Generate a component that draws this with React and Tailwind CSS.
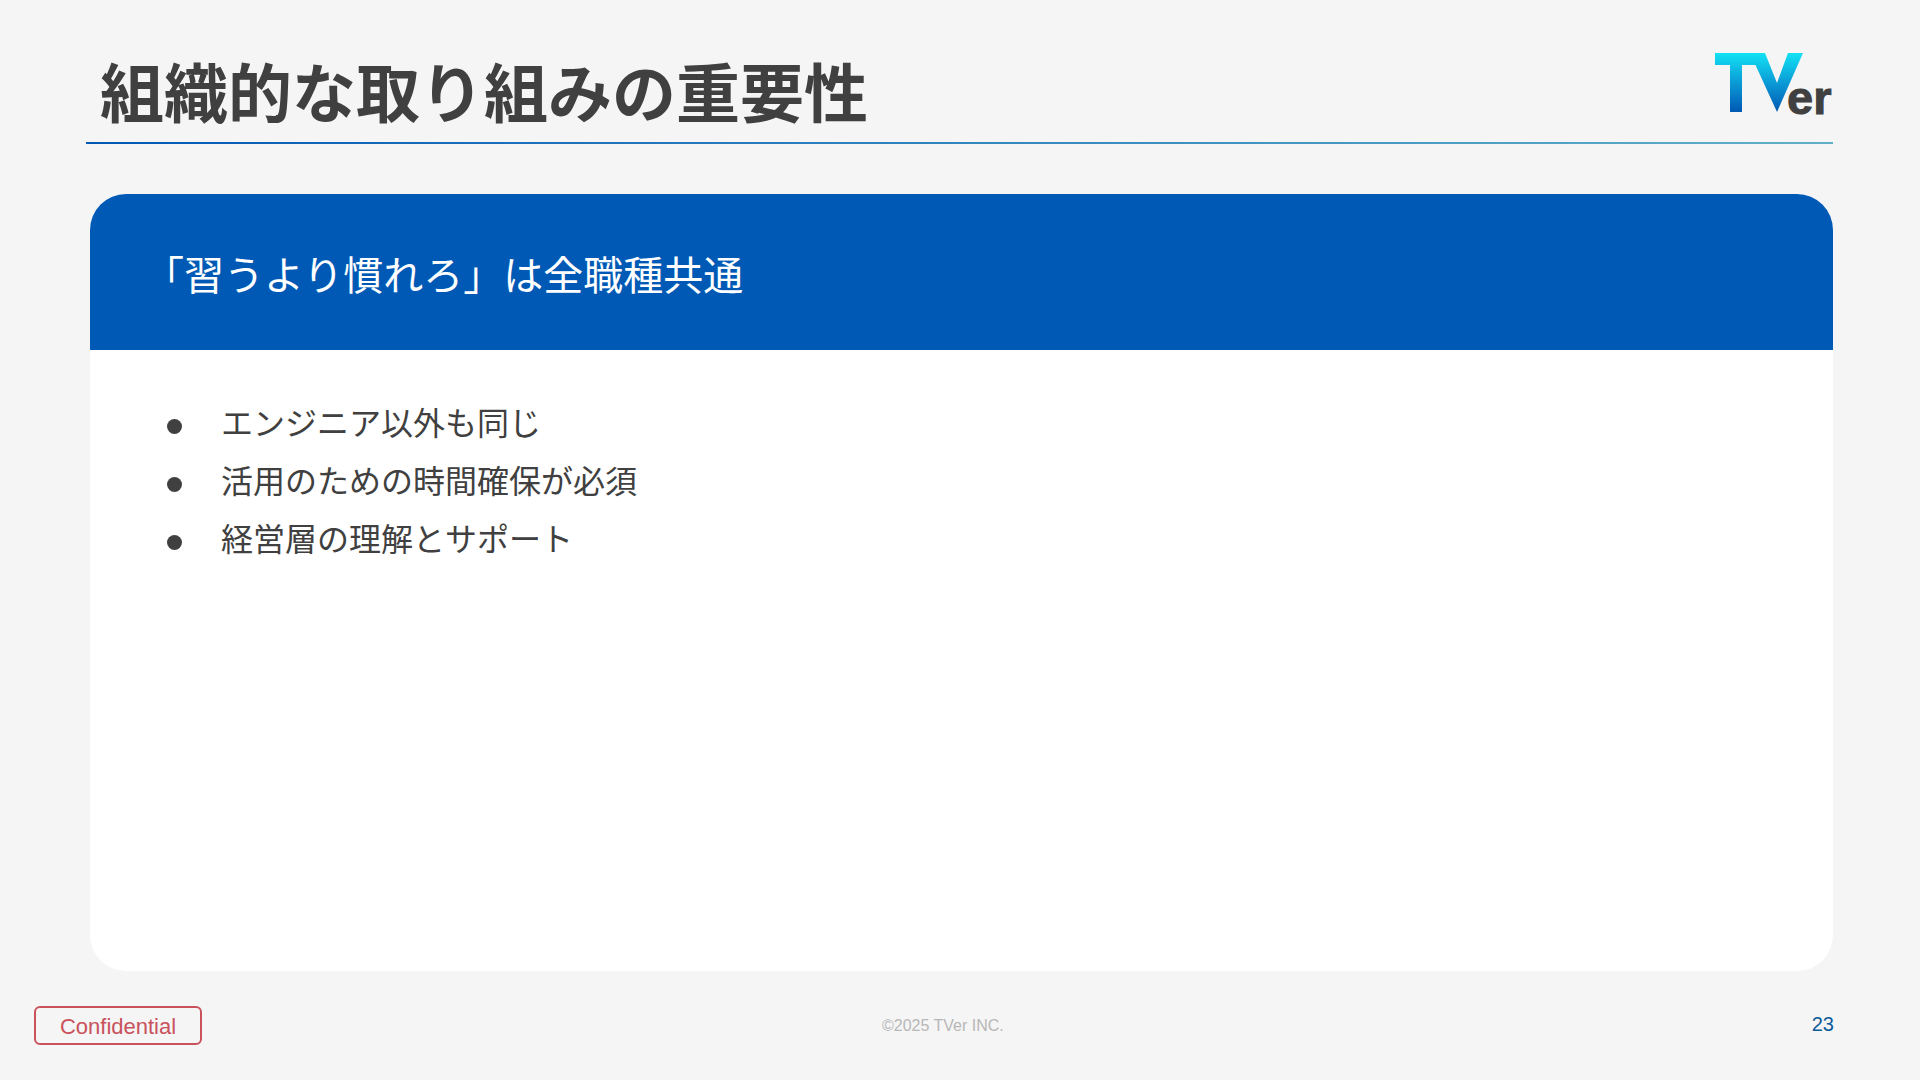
import React from 'react';

const jp = "font-['Liberation_Sans','Noto_Sans_CJK_JP',sans-serif]";

const TverLogo = () => (
  <svg width="120" height="84" viewBox="0 0 120 84" className="block">
    <defs>
      <linearGradient id="tverBlue" gradientUnits="userSpaceOnUse" x1="0" y1="6" x2="0" y2="65">
        <stop offset="0" stopColor="#12e2f4" />
        <stop offset="0.5" stopColor="#0b9bd6" />
        <stop offset="1" stopColor="#0058b4" />
      </linearGradient>
    </defs>
    <path d="M2 6H45L50 18H29V65H17V18H2Z" fill="url(#tverBlue)" />
    <path d="M37 6H52L64 36L75 6H90L64 65Z" fill="url(#tverBlue)" />
    <text x="74" y="67" fontFamily="Liberation Sans, sans-serif" fontWeight="700" fontSize="47" fill="#404040" stroke="#404040" strokeWidth="1">er</text>
  </svg>
);

const bullets = ['エンジニア以外も同じ', '活用のための時間確保が必須', '経営層の理解とサポート'];

export default function App() {
  return (
    <div className={`${jp} flex h-[1080px] w-[1920px] flex-col overflow-hidden bg-[#f5f5f5]`}>
      <header className="ml-[86px] mr-[87px] flex h-[144px] items-start justify-between">
        <h1 className="mt-[52px] ml-[14px] text-[64px] leading-[86px] font-bold text-[#404040]">組織的な取り組みの重要性</h1>
        <div className="mt-[47px]">
          <TverLogo />
        </div>
      </header>
      <div className="ml-[86px] mr-[87px] -mt-[2px] h-[2px] bg-gradient-to-r from-[#0058b4] to-[#5fb0c6]" />

      <main className="mt-[50px] ml-[90px] mr-[87px] flex h-[777px] flex-col overflow-hidden rounded-[36px] bg-white">
        <div className="flex h-[156px] items-center bg-[#005ab5] pl-[54px] pt-[8px]">
          <h2 className="text-[40px] font-normal leading-[56px] text-white">「習うより慣れろ」は全職種共通</h2>
        </div>
        <ul className="flex flex-col pt-[45px] pl-[77px]">
          {bullets.map((text) => (
            <li key={text} className="flex h-[58px] items-center text-[32px] text-[#404040]">
              <span className="mt-[4px] mr-[39px] h-[15px] w-[15px] rounded-full bg-[#404040]" />
              <span>{text}</span>
            </li>
          ))}
        </ul>
      </main>

      <footer className="relative flex flex-1 items-center">
        <div className="ml-[34px] flex h-[39px] w-[168px] items-center justify-center rounded-[6px] border-2 border-[#c9525c] pt-[1px] text-[22px] text-[#c9525c]">
          Confidential
        </div>
        <span className="ml-[680px] pt-[1px] text-[16px] text-[#b7b7b7]">©2025 TVer INC.</span>
        <span className="absolute right-[86px] top-[38px] text-[20px] text-[#0b5a9a]">23</span>
      </footer>
    </div>
  );
}
